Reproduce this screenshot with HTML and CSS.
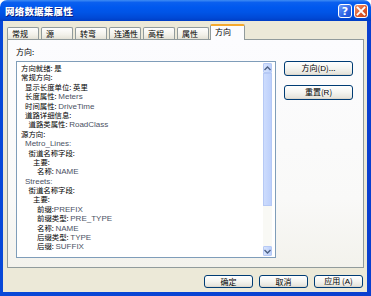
FILE: index.html
```html
<!DOCTYPE html>
<html lang="zh">
<head>
<meta charset="utf-8">
<link rel="stylesheet" href="styles.css">
</head>
<body>
<div class="window">
  <div class="titlebar">
    <span class="title">网络数据集属性</span>
    <div class="tbtns">
      <span class="tbtn help">?</span>
      <span class="tbtn close"><svg width="10" height="10" viewBox="0 0 10 10"><path d="M1.5 1.5 L8.5 8.5 M8.5 1.5 L1.5 8.5" stroke="#fff" stroke-width="1.8" stroke-linecap="square"/></svg></span>
    </div>
  </div>
  <div class="frame">
    <div class="body">
      <div class="tabs">
        <div class="tab">常规</div>
        <div class="tab">源</div>
        <div class="tab">转弯</div>
        <div class="tab">连通性</div>
        <div class="tab">高程</div>
        <div class="tab">属性</div>
        <div class="tab active">方向</div>
      </div>
      <div class="panel">
        <div class="label">方向:</div>
        <div class="spacer"></div>
        <div class="listbox">
          <div class="lines">
            <div class="l0">方向就绪: 是</div>
            <div class="l0">常规方向:</div>
            <div class="l1">显示长度单位: 英里</div>
            <div class="l1">长度属性: <span class="v">Meters</span></div>
            <div class="l1">时间属性: <span class="v">DriveTime</span></div>
            <div class="l1">道路详细信息:</div>
            <div class="l2">道路类属性: <span class="v">RoadClass</span></div>
            <div class="l0">源方向:</div>
            <div class="l1"><span class="v">Metro_Lines:</span></div>
            <div class="l2">街道名称字段:</div>
            <div class="l3">主要:</div>
            <div class="l4">名称: <span class="v">NAME</span></div>
            <div class="l1"><span class="v">Streets:</span></div>
            <div class="l2">街道名称字段:</div>
            <div class="l3">主要:</div>
            <div class="l4">前缀:<span class="v">PREFIX</span></div>
            <div class="l4">前缀类型: <span class="v">PRE_TYPE</span></div>
            <div class="l4">名称: <span class="v">NAME</span></div>
            <div class="l4">后缀类型: <span class="v">TYPE</span></div>
            <div class="l4">后缀: <span class="v">SUFFIX</span></div>
          </div>
          <div class="scrollbar">
            <div class="sbtn"><svg width="7" height="5" viewBox="0 0 7 5"><path d="M0.5 4 L3.5 1 L6.5 4" fill="none" stroke="#4d6185" stroke-width="1.4"/></svg></div>
            <div class="thumb"></div>
            <div class="track"></div>
            <div class="sbtn"><svg width="7" height="5" viewBox="0 0 7 5"><path d="M0.5 1 L3.5 4 L6.5 1" fill="none" stroke="#4d6185" stroke-width="1.4"/></svg></div>
          </div>
        </div>
        <div class="side">
          <button class="btn big">方向(<u>D</u>)...</button>
          <button class="btn big">重置(<u>R</u>)</button>
        </div>
      </div>
      <div class="footer">
        <button class="btn small">确定</button>
        <button class="btn small">取消</button>
        <button class="btn small">应用 (<u>A</u>)</button>
      </div>
    </div>
  </div>
</div>
</body>
</html>
```
FILE: styles.css
```css
html, body {
  margin: 0;
  padding: 0;
  background: #fff;
}
body {
  font-family: "Liberation Sans", "Noto Sans CJK SC", sans-serif;
}
.window {
  width: 371px;
  height: 296px;
  display: flex;
  flex-direction: column;
}
.titlebar {
  height: 21px;
  flex: none;
  border-radius: 7px 7px 0 0;
  background: linear-gradient(#3f8cf3 0%, #0a5fef 12%, #0058ee 35%, #0054e6 60%, #0049d6 85%, #003dc4 100%);
  display: flex;
  align-items: center;
  padding: 0 3px 0 5px;
}
.title {
  flex: 1;
  color: #fff;
  font-family: "Noto Sans CJK SC", sans-serif;
  font-weight: 900;
  font-size: 9.5px;
  letter-spacing: 0.2px;
  text-shadow: 1px 1px 0 #0a1f80;
}
.tbtns {
  display: flex;
  gap: 2px;
  padding-top: 1px;
}
.tbtn {
  width: 14px;
  height: 14px;
  box-sizing: border-box;
  border: 1px solid #fff;
  border-radius: 3px;
  display: flex;
  align-items: center;
  justify-content: center;
  color: #fff;
  font-weight: bold;
  font-size: 11px;
  font-family: "DejaVu Sans", sans-serif;
}
.help {
  background: linear-gradient(135deg, #6e9cf9 0%, #2d63e6 60%, #1d4fd0 100%);
}
.close {
  background: linear-gradient(135deg, #f0966f 0%, #e05a2e 55%, #c7431a 100%);
}
.frame {
  flex: 1;
  padding: 0 4px 4px 3px;
  display: flex;
  background: linear-gradient(90deg, #0848d8, #0a3fcf);
}
.body {
  flex: 1;
  background: #ece9d8;
  display: flex;
  flex-direction: column;
  padding: 3px 3px 0 4px;
}
.tabs {
  display: flex;
  align-items: flex-end;
  height: 15px;
  gap: 2px;
  position: relative;
  z-index: 1;
}
.tab {
  width: 32px;
  height: 12px;
  box-sizing: border-box;
  border: 1px solid #919b9c;
  border-bottom: none;
  border-radius: 2px 2px 0 0;
  background: linear-gradient(#fefefe, #f2f1ea 60%, #e4e2d6);
  font-family: "Noto Sans CJK SC", sans-serif;
  font-size: 8px;
  line-height: 11px;
  padding-left: 4px;
  color: #000;
}
.tab.active {
  width: 35px;
  height: 16px;
  margin-bottom: -1px;
  margin-left: -1px;
  background: #fcfcfe;
  border-top: 2px solid #f5a92d;
  line-height: 11px;
}
.panel {
  height: 229px;
  box-sizing: border-box;
  width: 357px;
  border: 1px solid #919b9c;
  background: linear-gradient(#fcfcfe 0%, #f9f9f8 70%, #f3f2ec 100%);
  display: grid;
  grid-template-columns: 260px 69px;
  grid-template-rows: 15px 197px;
  column-gap: 8px;
  padding: 6px 0 0 8px;
}
.label {
  font-family: "Noto Sans CJK SC", sans-serif;
  font-size: 8px;
  line-height: 12px;
  color: #000;
}
.listbox {
  border: 1px solid #7f9db9;
  background: #fff;
  display: flex;
  box-sizing: border-box;
}
.lines {
  flex: 1;
  padding: 1px 0 0 4px;
  font-family: "Noto Sans CJK SC", sans-serif;
  font-size: 7.4px;
  color: #000;
  white-space: nowrap;
}
.lines > div {
  height: 9.4px;
  line-height: 9.4px;
  overflow: visible;
}
.v {
  font-family: "Liberation Sans", sans-serif;
  font-size: 8px;
  line-height: 9.4px;
  color: #4a5163;
}
.l1 { padding-left: 4px; }
.l2 { padding-left: 7.5px; }
.l3 { padding-left: 12px; }
.l4 { padding-left: 16px; }
.scrollbar {
  width: 9px;
  margin: 1px 3px 1px 0;
  display: flex;
  flex-direction: column;
  background: #f7f7f3;
}
.sbtn {
  height: 10px;
  box-sizing: border-box;
  border: 1px solid #b6c9f5;
  border-radius: 1px;
  background: linear-gradient(90deg, #d8e4fd, #bcd0fb);
  display: flex;
  align-items: center;
  justify-content: center;
}
.thumb {
  height: 133px;
  box-sizing: border-box;
  border: 1px solid #b6c9f5;
  background: linear-gradient(90deg, #cddcfd, #bdd0fb);
}
.track {
  flex: 1;
  background: #f9f9f5;
}
.side {
  display: flex;
  flex-direction: column;
  gap: 9px;
}
.btn {
  box-sizing: border-box;
  border: 1px solid #003c74;
  border-radius: 3px;
  background: linear-gradient(#ffffff 0%, #f4f4f0 50%, #e6e4dc 90%, #d6d0c5 100%);
  font-family: "Noto Sans CJK SC", sans-serif;
  font-size: 8px;
  color: #000;
  padding: 0;
  margin: 0;
  line-height: 1;
}
.btn u { text-decoration: none; font-family: "Liberation Sans", sans-serif; }
.big {
  width: 69px;
  height: 15px;
}
.footer {
  flex: 1;
  display: flex;
  justify-content: flex-end;
  align-items: flex-start;
  gap: 6px;
  padding: 7px 1px 0 0;
}
.small {
  width: 49px;
  height: 13px;
}
```
